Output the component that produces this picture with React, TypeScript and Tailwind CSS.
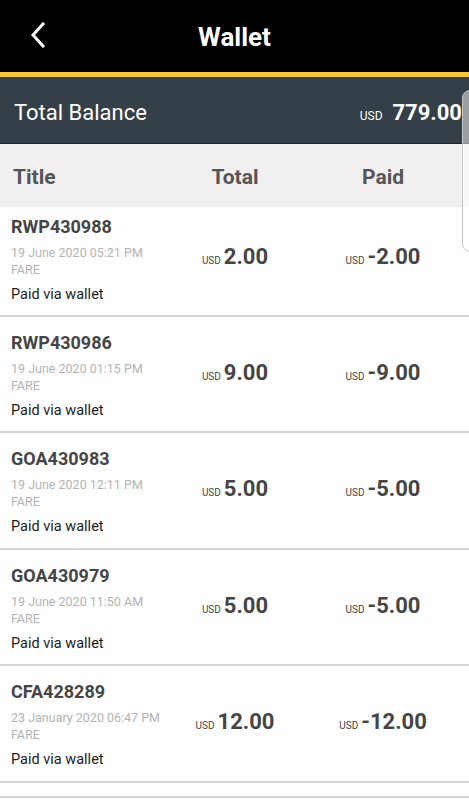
import React from 'react';

interface Txn {
  id: string;
  date: string;
  total: string;
  paid: string;
}

const txns: Txn[] = [
  { id: 'RWP430988', date: '19 June 2020 05:21 PM', total: '2.00', paid: '-2.00' },
  { id: 'RWP430986', date: '19 June 2020 01:15 PM', total: '9.00', paid: '-9.00' },
  { id: 'GOA430983', date: '19 June 2020 12:11 PM', total: '5.00', paid: '-5.00' },
  { id: 'GOA430979', date: '19 June 2020 11:50 AM', total: '5.00', paid: '-5.00' },
  { id: 'CFA428289', date: '23 January 2020 06:47 PM', total: '12.00', paid: '-12.00' },
];

function Amount({ value }: { value: string }) {
  return (
    <div className="flex items-baseline justify-center text-[#454545]">
      <span className="text-[10px] mr-[3px]">USD</span>
      <span className="text-[22px] font-bold">{value}</span>
    </div>
  );
}

export default function App() {
  return (
    <div className="relative w-[469px] h-[800px] overflow-hidden bg-white font-['Roboto',sans-serif]">
      {/* Top bar */}
      <div className="relative flex items-center justify-center h-[72px] bg-black">
        <svg
          className="absolute left-[30px] top-[22px]"
          width="16"
          height="26"
          viewBox="0 0 16 26"
          fill="none"
          stroke="white"
          strokeWidth="3"
          strokeLinecap="square"
        >
          <path d="M13 2 L3 13 L13 24" />
        </svg>
        <span className="text-white text-[26px] font-bold leading-none mt-[1px]">Wallet</span>
      </div>
      <div className="h-[5px] bg-[#f4c232]" />

      {/* Balance */}
      <div className="flex items-center justify-between h-[67px] bg-[#353f47] border-b border-[#1e2428] pl-[14px] pr-[7px] pt-[5px]">
        <span className="text-white text-[22px]">Total Balance</span>
        <div className="flex items-baseline text-white">
          <span className="text-[12px] mr-[10px]">USD</span>
          <span className="text-[22px] font-bold">779.00</span>
        </div>
      </div>

      {/* Header row */}
      <div className="flex items-center h-[63px] bg-[#f2eff0] text-[#555555] text-[21px] font-bold pt-[5px]">
        <div className="w-[161px] pl-[13px]">Title</div>
        <div className="w-[148px] text-center">Total</div>
        <div className="w-[148px] text-center">Paid</div>
      </div>

      {/* Rows */}
      <div className="flex flex-col">
        {txns.map((t, i) => (
          <div
            key={t.id}
            className={`flex items-center border-b-2 border-[#d4d4d4] ${i === 0 ? 'pt-[9px]' : 'pt-[15px]'} ${
              i % 2 === 0 && i > 0 ? 'pb-[11px]' : 'pb-[10px]'
            }`}
          >
            <div className="w-[161px] pl-[11px] flex flex-col">
              <span className="text-[18px] leading-[22px] font-bold text-[#454545]">{t.id}</span>
              <span className="mt-[6px] text-[12.5px] leading-[17px] text-[#b3b3b3] whitespace-nowrap">{t.date}</span>
              <span className="text-[12.5px] leading-[17px] text-[#b3b3b3]">FARE</span>
              <span className="mt-[7px] text-[14.5px] leading-[20px] text-[#1c1c1c]">Paid via wallet</span>
            </div>
            <div className="w-[148px] -mt-[9px]">
              <Amount value={t.total} />
            </div>
            <div className="w-[148px] -mt-[9px]">
              <Amount value={t.paid} />
            </div>
          </div>
        ))}
        <div className="h-[15px] border-b-2 border-[#d4d4d4]" />
      </div>

      {/* Scroll overlay */}
      <div className="absolute left-[462px] top-[90px] w-[20px] h-[162px] rounded-[8px] border border-[#c8c8c8] bg-white/50" />
    </div>
  );
}
